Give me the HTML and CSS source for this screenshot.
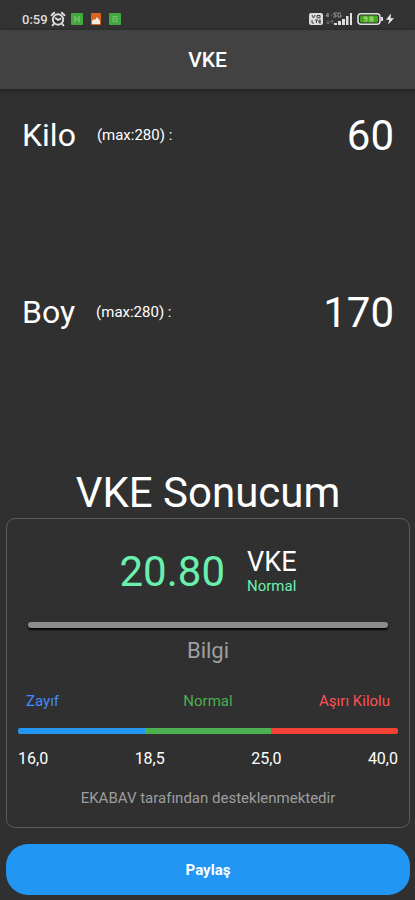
FILE: index.html
```html
<!DOCTYPE html>
<html lang="tr">
<head>
<meta charset="utf-8">
<meta name="viewport" content="width=device-width, initial-scale=1">
<title>VKE</title>
<link rel="stylesheet" href="styles.css">
</head>
<body>
<div class="status">
  <div class="status-group">
    <span class="clock">0:59</span>
    <svg class="alarm" width="16" height="16" viewBox="0 0 16 16" fill="none" stroke="#dedede" stroke-width="1.9" stroke-linecap="round"><circle cx="8" cy="8.5" r="5.2"/><path d="M1.5 4.2 4.2 1.7M14.5 4.2 11.8 1.7M3.8 13 2.6 14.4M12.2 13l1.2 1.4M5.8 7.2 8 9l2.4-1.2"/></svg>
    <svg class="app-icon" width="12" height="12" viewBox="0 0 12 12"><rect width="12" height="12" rx="1" fill="#43a83e"/><path d="M4 3v6M8 3v6M4 6h4" stroke="#72c46d" stroke-width="1.600"/></svg>
    <svg class="app-icon" width="12" height="12" viewBox="0 0 12 12"><rect x="1" width="10" height="12" rx="1" fill="#d9651f"/><path d="M2 11V8l2-2 1 1 2-3 3 4v3z" fill="#f4ece6"/></svg>
    <svg class="app-icon" width="12" height="12" viewBox="0 0 12 12"><rect width="12" height="12" rx="1" fill="#43a83e"/><path d="M4 3.500h4M4 6h4M4 8.500h4M4 3v6M8 3v6" stroke="#72c46d" stroke-width="1"/></svg>
  </div>
  <div class="status-group">
    <svg width="86" height="16" viewBox="0 0 86 16">
      <rect x="0" y="2" width="14" height="12" rx="2" fill="#dcdcdc"/>
      <path d="m3 4 1.500 3L6 4M8 4.500h3v2.300H8zM3 9v3h2M6 9h3M7.500 9v3M12 9h-2v3h2M10 10.500h2" fill="none" stroke="#444" stroke-width="1"/>
      <path d="M19 2l-2 3h3M19 2v4M22 4h1M28 2h-3v2h2v2h-3M32 2h-3v4h3V4h-1" fill="none" stroke="#aaa" stroke-width=".8"/>
      <path d="M19 9v4M17.500 11 19 13l1.500-2M23 13V9M21.500 11 23 9l1.500 2" fill="none" stroke="#777" stroke-width=".8"/>
      <path d="M25 14v-2h3v2zM29 14v-4h3v4zM33 14V8h3v6zM37 14V5h2.500v9zM41 14V2h2v12z" fill="#dedede"/>
      <rect x="49" y="2.800" width="22" height="10.500" rx="3" fill="none" stroke="#dedede" stroke-width="1.600"/>
      <path d="M73 6v4" stroke="#dedede" stroke-width="2"/>
      <rect x="51" y="4.600" width="18" height="7" rx="1.500" fill="#46a91c"/>
      <path d="M58 7.500h-3V6h3v4h-3M61 6h3v4h-3zM61 8h3" fill="none" stroke="#a5dc82" stroke-width="1"/>
      <path d="M82 2.500 77 8.700h3.500L79 13.500l6-6.200h-3.500z" fill="#eee"/>
    </svg>
  </div>
</div>
<header class="appbar"><h1>VKE</h1></header>
<main>
  <form class="fields">
    <div class="field">
      <label for="kilo">Kilo</label>
      <span class="hint">(max:280) :</span>
      <input id="kilo" type="text" inputmode="numeric" value="60">
    </div>
    <div class="field">
      <label for="boy">Boy</label>
      <span class="hint">(max:280) :</span>
      <input id="boy" type="text" inputmode="numeric" value="170">
    </div>
  </form>
  <h2>VKE Sonucum</h2>
  <section class="card">
    <div class="result">
      <span class="score">20.80</span>
      <div class="unit"><span class="unit-name">VKE</span><span class="unit-state">Normal</span></div>
    </div>
    <div class="divider"></div>
    <h3>Bilgi</h3>
    <div class="ranges"><span class="low">Zayıf</span><span class="mid">Normal</span><span class="high">Aşırı Kilolu</span></div>
    <div class="scale"><i></i><i></i><i></i></div>
    <div class="limits"><span>16,0</span><span>18,5</span><span>25,0</span><span>40,0</span></div>
    <p class="support">EKABAV tarafından desteklenmektedir</p>
  </section>
  <button class="share" type="button">Paylaş</button>
</main>
</body>
</html>
```
FILE: styles.css
```css
* {
  box-sizing: border-box;
}

body {
  margin: 0;
  min-height: 100vh;
  display: flex;
  flex-direction: column;
  background: #303030;
  color: #fff;
  font-family: Roboto, "Liberation Sans", sans-serif;
}

h1, h2, h3, p {
  margin: 0;
  font-weight: 400;
}

.status {
  display: flex;
  justify-content: space-between;
  align-items: center;
  height: 30px;
  padding: 8px 20px 0 22px;
  background: #333;
}

.status-group {
  display: flex;
  align-items: center;
}

.status-group svg {
  display: block;
}

.clock {
  color: #dedede;
  font-size: 13px;
  font-weight: 500;
}

.alarm {
  margin-left: 2px;
}

.app-icon {
  margin-left: 7px;
}

.alarm + .app-icon {
  margin-left: 5px;
}

.appbar {
  position: relative;
  display: flex;
  align-items: center;
  justify-content: center;
  height: 59px;
  background: #424242;
  box-shadow: 0 1px 4px #1c1c1c;
}

.appbar h1 {
  font-size: 21px;
  font-weight: 500;
}

main {
  flex: 1;
  display: flex;
  flex-direction: column;
  padding: 0 5px 5px 6px;
}

.fields {
  flex: 1;
  display: flex;
  flex-direction: column;
  gap: 127px;
  padding: 21px 16px 0;
}

.field {
  display: flex;
  align-items: center;
  height: 50px;
}

.field label {
  font-size: 32px;
}

.hint {
  margin-left: 21px;
  font-size: 15px;
}

.field input {
  flex: 1;
  min-width: 0;
  height: 50px;
  padding: 0;
  border: 0;
  outline: 0;
  background: transparent;
  color: inherit;
  font: inherit;
  font-size: 42px;
  text-align: right;
}

h2 {
  font-size: 42px;
  line-height: 50px;
  text-align: center;
}

.card {
  border: 1px solid #5a5a5a;
  border-radius: 9px;
  padding: 27px 11px 20px;
}

.result {
  display: flex;
  justify-content: center;
  align-items: center;
  gap: 22px;
  height: 50px;
}

.score {
  color: #69f0ae;
  font-size: 42px;
}

.unit {
  display: flex;
  flex-direction: column;
}

.unit-name {
  font-size: 27px;
  line-height: 30px;
}

.unit-state {
  color: #69f0ae;
  font-size: 15px;
  line-height: 18px;
}

.divider {
  height: 6px;
  margin: 26px 10px 0;
  border-radius: 3px;
  background: #8c8c8c;
  box-shadow: 0 2px 2px #000;
}

h3 {
  margin-top: 10px;
  color: #9e9e9e;
  font-size: 22px;
  line-height: 26px;
  text-align: center;
}

.ranges {
  display: grid;
  grid-template-columns: 1fr 1fr 1fr;
  margin-top: 28px;
  padding: 0 8px;
  font-size: 15px;
  line-height: 18px;
  text-align: center;
}

.low {
  color: #448aff;
  text-align: left;
}

.mid {
  color: #4caf50;
}

.high {
  color: #ff5252;
  text-align: right;
}

.scale {
  display: flex;
  height: 6px;
  margin-top: 18px;
  border-radius: 2px;
  overflow: hidden;
}

.scale i {
  flex: 1;
  background: #2196f3;
}

.scale i:nth-child(2) {
  background: #4caf50;
}

.scale i:nth-child(3) {
  background: #f44336;
}

.limits {
  display: flex;
  justify-content: space-between;
  margin-top: 16px;
  font-size: 16px;
  line-height: 18px;
}

.support {
  margin-top: 21px;
  color: #9e9e9e;
  font-size: 15px;
  line-height: 18px;
  text-align: center;
}

.share {
  height: 51px;
  margin-top: 16px;
  border: 0;
  border-radius: 22px;
  background: #2196f3;
  color: #fff;
  font: inherit;
  font-size: 15px;
  font-weight: 700;
}
```
